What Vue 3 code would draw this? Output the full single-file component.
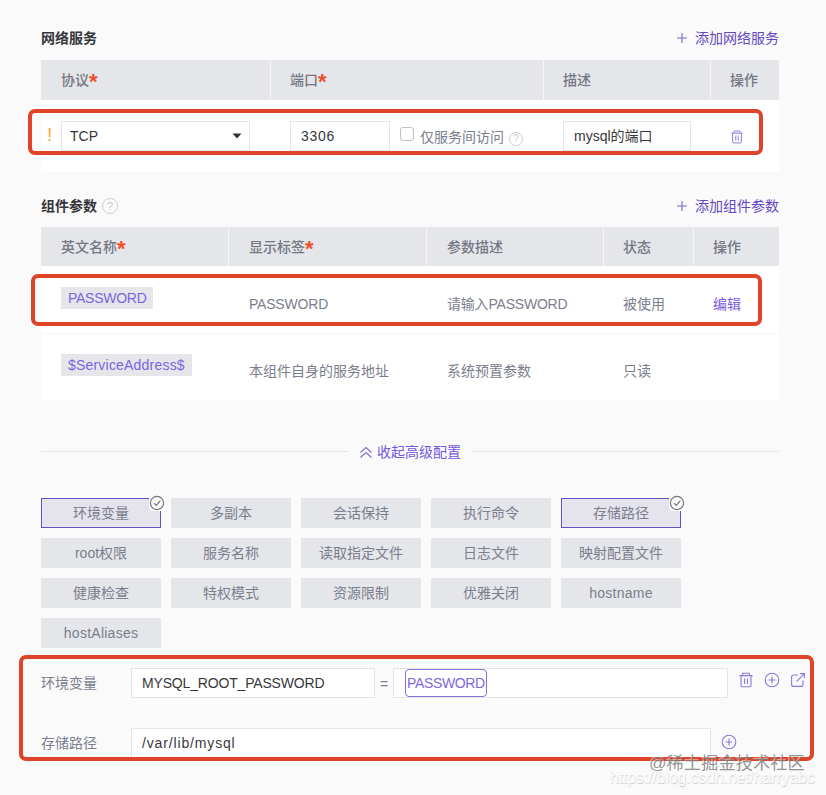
<template>
  <div class="page">
    <!-- 网络服务 -->
    <section class="block ports">
      <div class="block-head">
        <h3>网络服务</h3>
        <a class="add">
          <svg width="12" height="12" viewBox="0 0 12 12"><path d="M6 1v10M1 6h10" /></svg>
          添加网络服务
        </a>
      </div>
      <div class="row thead port-cols">
        <div v-for="col in portCols" :key="col.text" class="th">
          {{ col.text }}<i v-if="col.required" class="star">*</i>
        </div>
      </div>
      <div class="row port-cols port-row">
        <div class="td protocol">
          <span class="warn">!</span>
          <div class="field select">
            TCP
            <svg width="10" height="6" viewBox="0 0 10 6"><path d="M0.5 0.5h9L5 5.5z" /></svg>
          </div>
        </div>
        <div class="td port">
          <div class="field num">3306</div>
          <span class="checkbox"></span>
          <span class="only">仅服务间访问</span>
          <span class="help small">?</span>
        </div>
        <div class="td"><div class="field desc">mysql的端口</div></div>
        <div class="td ops">
          <svg class="icon" width="14" height="14" viewBox="0 0 16 16"><path :d="icons.trash" /></svg>
        </div>
      </div>
    </section>

    <!-- 组件参数 -->
    <section class="block params">
      <div class="block-head">
        <h3>组件参数</h3>
        <span class="help">?</span>
        <a class="add">
          <svg width="12" height="12" viewBox="0 0 12 12"><path d="M6 1v10M1 6h10" /></svg>
          添加组件参数
        </a>
      </div>
      <div class="row thead param-cols">
        <div v-for="col in paramCols" :key="col.text" class="th">
          {{ col.text }}<i v-if="col.required" class="star">*</i>
        </div>
      </div>
      <div v-for="item in params" :key="item.name" class="row param-cols param-row">
        <div class="td name">
          <span class="tag" :class="{ readonly: !item.editable }">{{ item.name }}</span>
        </div>
        <div class="td upper">{{ item.label }}</div>
        <div class="td upper">{{ item.desc }}</div>
        <div class="td">{{ item.state }}</div>
        <div class="td"><a v-if="item.editable" class="edit">编辑</a></div>
      </div>
    </section>

    <!-- 高级配置 -->
    <div class="divider">
      <a>
        <svg width="14" height="14" viewBox="0 0 14 14"><path d="M1.5 7.5L7 2.5l5.5 5M1.5 12.5L7 7.5l5.5 5" /></svg>
        收起高级配置
      </a>
    </div>

    <div class="tiles">
      <div v-for="t in tiles" :key="t" class="tile" :class="{ active: selected.includes(t), latin: /^[a-z]+$/i.test(t) }" @click="toggle(t)">
        {{ t }}
        <span v-if="selected.includes(t)" class="badge">
          <svg width="16" height="16" viewBox="0 0 16 16">
            <circle cx="8" cy="8" r="6.6" />
            <path d="M5 8.2l2.2 2.2 4-4.4" />
          </svg>
        </span>
      </div>
    </div>

    <div class="form-row">
      <label>环境变量</label>
      <div class="field env-key">MYSQL_ROOT_PASSWORD</div>
      <span class="eq">=</span>
      <div class="field env-value"><span class="var">PASSWORD</span></div>
      <div class="actions">
        <svg class="icon" width="16" height="16" viewBox="0 0 16 16"><path :d="icons.trash" /></svg>
        <svg class="icon" width="16" height="16" viewBox="0 0 16 16"><path :d="icons.plus" /></svg>
        <svg class="icon" width="16" height="16" viewBox="0 0 16 16"><path :d="icons.link" /></svg>
      </div>
    </div>
    <div class="form-row storage">
      <label>存储路径</label>
      <div class="field path">/var/lib/mysql</div>
      <div class="actions">
        <svg class="icon" width="16" height="16" viewBox="0 0 16 16"><path :d="icons.plus" /></svg>
      </div>
    </div>

    <!-- 红色标注框 -->
    <div class="mark mark-port"></div>
    <div class="mark mark-param"></div>
    <div class="mark mark-env"></div>

    <div class="water url">https://blog.csdn.net/harryabc</div>
    <div class="water juejin">@稀土掘金技术社区</div>
  </div>
</template>

<script setup>
import { ref } from 'vue';

const portCols = [
  { text: '协议', required: true },
  { text: '端口', required: true },
  { text: '描述' },
  { text: '操作' },
];

const paramCols = [
  { text: '英文名称', required: true },
  { text: '显示标签', required: true },
  { text: '参数描述' },
  { text: '状态' },
  { text: '操作' },
];

const params = [
  { name: 'PASSWORD', label: 'PASSWORD', desc: '请输入PASSWORD', state: '被使用', editable: true },
  { name: '$ServiceAddress$', label: '本组件自身的服务地址', desc: '系统预置参数', state: '只读' },
];

const tiles = [
  '环境变量', '多副本', '会话保持', '执行命令', '存储路径',
  'root权限', '服务名称', '读取指定文件', '日志文件', '映射配置文件',
  '健康检查', '特权模式', '资源限制', '优雅关闭', 'hostname',
  'hostAliases',
];

// 已选中的配置项
const selected = ref(['环境变量', '存储路径']);

const toggle = (name) => {
  const i = selected.value.indexOf(name);
  if (i > -1) {
    selected.value.splice(i, 1);
  } else {
    selected.value.push(name);
  }
};

// 图标路径
const icons = {
  trash: 'M1.4 3.6h13.2M4.6 3.4V1.2h6.8v2.2M3 3.8v9.8q0 1.2 1.2 1.2h7.6q1.2 0 1.2-1.2V3.8M6.6 6.4v5.6M9.4 6.4v5.6',
  plus: 'M8 1.2a6.8 6.8 0 1 0 0 13.6a6.8 6.8 0 1 0 0-13.6M8 4.6v6.8M4.6 8h6.8',
  link: 'M8 3H3.6Q1.6 3 1.6 5v7.4q0 2 2 2H11q2 0 2-2V8.4M6.6 9.4L14.2 1.8M10 1.6h4.4V6',
};
</script>

<style>
body {
  background: #fafafb;
}
</style>

<style scoped>
.page {
  position: relative;
  box-sizing: border-box;
  width: 826px;
  height: 795px;
  padding: 18px 47px 0 41px;
  overflow: hidden;
  background: #fafafb;
  color: #7b7e8c;
  font-family: "Liberation Sans", "Noto Sans CJK SC", sans-serif;
  font-size: 14px;
  line-height: 20px;
}

.block-head {
  display: flex;
  align-items: center;
  box-sizing: border-box;
  height: 42px;
  padding-bottom: 2px;
}

.params .block-head {
  height: 41px;
}

h3 {
  margin: 0;
  color: #35353a;
  font-size: 14px;
  font-weight: bold;
}

.add {
  display: flex;
  align-items: center;
  gap: 7px;
  margin-left: auto;
  color: #6447c4;
}

.add svg {
  fill: none;
  stroke: #7a62cd;
  stroke-width: 1.1;
}

.help {
  box-sizing: border-box;
  width: 16px;
  height: 16px;
  margin-left: 5px;
  border: 1px solid #cfcfd3;
  border-radius: 50%;
  color: #c4c4c9;
  font-size: 11px;
  line-height: 14px;
  text-align: center;
}

.help.small {
  width: 14px;
  height: 14px;
  font-size: 10px;
  line-height: 12px;
}

.row {
  display: grid;
  background: #fff;
}

.port-cols {
  grid-template-columns: 230px 273px 167px 68px;
}

.param-cols {
  grid-template-columns: 188px 198px 177px 90px 85px;
}

.thead {
  height: 40px;
  background: #e5e6ea;
}

.params .thead {
  height: 39px;
}

.th {
  display: flex;
  align-items: center;
  padding-left: 20px;
  border-right: 1px solid #f6f6f8;
  color: #747784;
  font-weight: 500;
}

.th:last-child {
  border-right: 0;
}

.star {
  height: 18px;
  color: #ee4f2d;
  font-size: 22px;
  font-style: normal;
  font-weight: bold;
  line-height: 21px;
}

.td {
  padding-left: 20px;
}

/* 端口表后三列、参数表后两列略微左移 */
.port-cols > :nth-child(n + 2),
.param-cols > :nth-child(n + 4) {
  padding-left: 19px;
}

.port-row {
  box-sizing: border-box;
  height: 72px;
  padding-top: 21px;
}

.port-row .td {
  display: flex;
}

.field {
  box-sizing: border-box;
  height: 30px;
  padding: 0 10px;
  border: 1px solid #e4e5e8;
  background: #fff;
  color: #37373b;
  line-height: 28px;
}

.port-row .protocol {
  padding-left: 6px;
}

.warn {
  width: 14px;
  color: #f3a73c;
  font-size: 19px;
  line-height: 28px;
}

.select {
  display: flex;
  align-items: center;
  justify-content: space-between;
  width: 189px;
  padding: 0 7px 0 8px;
}

.select svg {
  fill: #333;
}

.num {
  width: 100px;
  letter-spacing: 0.7px;
}

.checkbox {
  box-sizing: border-box;
  width: 14px;
  height: 14px;
  margin: 6px 6px 0 10px;
  border: 1px solid #bfbfc4;
  border-radius: 3px;
}

.only {
  line-height: 32px;
}

.port-row .port .help {
  margin-top: 11px;
}

.desc {
  width: 128px;
}

.ops svg {
  margin-top: 9px;
}

.icon {
  fill: none;
  stroke: #8b78dc;
  stroke-width: 1.1;
}

.params {
  margin-top: 14px;
}

.param-row {
  box-sizing: border-box;
  height: 67px;
  padding-top: 28px;
}

.param-row + .param-row {
  border-top: 1px solid #f7f7f9;
  padding-top: 27px;
}

.param-row:nth-child(3) .upper {
  letter-spacing: -0.2px;
}

.name {
  margin-top: -7px;
}

.tag {
  display: inline-block;
  height: 22px;
  padding: 0 7px;
  background: #e6e6ea;
  color: #7c64e2;
  letter-spacing: -0.27px;
  line-height: 22px;
}

.tag.readonly {
  letter-spacing: 0.2px;
}

.edit {
  color: #7a58dc;
}

.divider {
  display: flex;
  align-items: center;
  gap: 11px;
  height: 19px;
  margin: 42px 0 37px;
}

.divider::before,
.divider::after {
  content: '';
  flex: 1;
  height: 1px;
  background: #e4e5e8;
}

.divider a {
  display: flex;
  align-items: center;
  gap: 4px;
  color: #7658dc;
}

.divider svg {
  fill: none;
  stroke: #8069dc;
  stroke-width: 1.1;
}

.tiles {
  display: grid;
  grid-template-columns: repeat(5, 120px);
  grid-auto-rows: 30px;
  gap: 10px;
}

.tile {
  position: relative;
  box-sizing: border-box;
  background: #e5e6ea;
  line-height: 30px;
  text-align: center;
}

.tile.latin {
  letter-spacing: 0.25px;
}

.tile.active {
  border: 1px solid #6152c4;
  background: #e5e4ed;
  line-height: 28px;
}

.badge {
  position: absolute;
  top: -4px;
  right: -5px;
  width: 16px;
  height: 16px;
  border-bottom-left-radius: 2px;
  background: #fafafb;
}

.badge svg {
  display: block;
  fill: #fafafb;
  stroke: #77777c;
  stroke-width: 1.2;
}

.form-row {
  display: flex;
  width: 768px;
  height: 30px;
  margin-top: 20px;
  line-height: 30px;
}

.storage {
  margin-top: 30px;
}

label {
  width: 90px;
}

.env-key {
  width: 244px;
  letter-spacing: -0.17px;
}

.eq {
  width: 18px;
  line-height: 32px;
  text-align: center;
}

.env-value {
  width: 335px;
  padding-left: 11px;
}

.var {
  display: inline-block;
  box-sizing: border-box;
  height: 28px;
  padding: 0 1px;
  border: 1px solid #8571dc;
  border-radius: 4px;
  color: #7f68dc;
  letter-spacing: -0.35px;
  line-height: 26px;
  vertical-align: top;
}

.path {
  width: 580px;
  letter-spacing: 0.85px;
}

.actions {
  display: flex;
  gap: 10px;
  margin: 4px 0 0 10px;
}

.storage .actions {
  margin-top: 6px;
}

.mark {
  position: absolute;
  box-sizing: border-box;
  border: 4px solid #df4328;
  border-radius: 7px;
  pointer-events: none;
}

.mark-port {
  top: 109px;
  left: 28px;
  width: 735px;
  height: 46px;
}

.mark-param {
  top: 274px;
  left: 31px;
  width: 731px;
  height: 52px;
}

.mark-env {
  top: 655px;
  left: 19px;
  width: 795px;
  height: 106px;
}

.water {
  position: absolute;
  white-space: nowrap;
}

.juejin {
  top: 753px;
  left: 649px;
  color: rgba(120, 120, 120, 0.8);
  font-size: 17.3px;
  text-shadow: -1px -1px 0 rgba(255, 255, 255, 0.5);
}

.url {
  top: 768px;
  left: 610px;
  color: #fdfdfd;
  font-size: 15.6px;
  text-shadow: 0.5px 0.5px 1px #c8c8cb;
}
</style>
